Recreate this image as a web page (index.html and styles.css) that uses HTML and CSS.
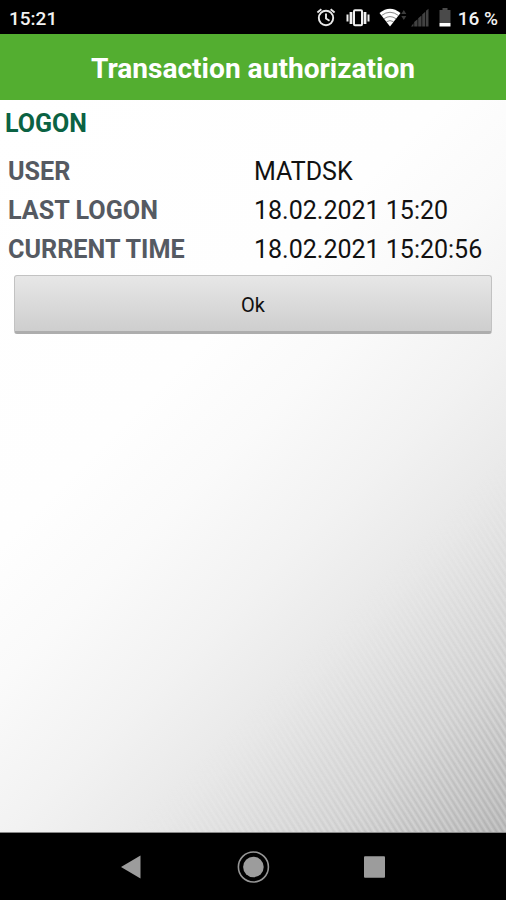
FILE: index.html
```html
<!DOCTYPE html>
<html lang="en">
<head>
  <meta charset="UTF-8" />
  <meta name="viewport" content="width=device-width, initial-scale=1.0"/>
  <title>Transaction authorization</title>
  <link rel="stylesheet" href="styles.css">
</head>
<body>

  <!-- Status bar -->
  <div class="status-bar">
    <span class="clock">15:21</span>
    <svg class="status-icons" width="138" height="34" viewBox="0 0 138 34">
      <!-- alarm -->
      <g fill="none" stroke="#e8e8e8" stroke-width="1.9">
        <circle cx="11" cy="18" r="7.2"/>
        <path d="M11 13.5v5l3.5 2.2M2.4 12.4l4-3.2M19.6 12.4l-4-3.2"/>
      </g>
      <!-- vibrate -->
      <g fill="none" stroke="#f0f0f0">
        <rect x="39" y="10.2" width="8" height="15" rx="1" stroke-width="2"/>
        <path d="M36 12v12M50 12v12" stroke-width="2.8"/>
        <path d="M32.5 14.5v7M53.5 14.5v7" stroke-width="2"/>
      </g>
      <!-- wifi -->
      <path d="M64.5 13Q75 4.5 85.5 13L75 26.5z" fill="#fff"/>
      <path d="M66.5 15.5Q75 9 83.5 15.5M69 18.7Q75 14.5 81 18.7M71.5 21.7Q75 19.5 78.5 21.7" fill="none" stroke="#555" stroke-width=".7"/>
      <path d="M86.3 14l2.5-4 2.5 4zM86.3 16l2.5 4 2.5-4z" fill="#3c3c3c"/>
      <!-- signal -->
      <path d="M96 26.5h2.5v-3.2zM99.2 26.5v-4.5l3.3-2.8v7.3zM103.2 26.5v-8.2l3.3-2.8v11zM107.2 26.5v-12l3.1-2.7v14.7zM111 26.5v-15.8l2.5-2v17.8z" fill="#424242"/>
      <!-- battery -->
      <path d="M124.5 10h3V8h5v2h3v13h-11z" fill="#4a4a4a"/>
      <path d="M124.5 23h11v3.5h-11z" fill="#fff"/>
    </svg>
    <span class="battery">16 %</span>
  </div>

  <div class="navbar">
    <h1>Transaction authorization</h1>
  </div>

  <div class="content">
    <h2>LOGON</h2>
    <dl class="details">
      <dt>USER</dt>
      <dd>MATDSK</dd>
      <dt>LAST LOGON</dt>
      <dd>18.02.2021 15:20</dd>
      <dt>CURRENT TIME</dt>
      <dd>18.02.2021 15:20:56</dd>
    </dl>
    <button class="ok-btn">Ok</button>
  </div>

  <!-- Android buttons -->
  <div class="bottom-nav">
    <svg width="34" height="34" viewBox="0 0 34 34">
      <path d="M7 17L26.5 5.5v23z" fill="#9c9c9c"/>
    </svg>
    <svg width="34" height="34" viewBox="0 0 34 34">
      <circle cx="17.4" cy="17" r="15" fill="none" stroke="#969696" stroke-width="1.6"/>
      <circle cx="17.4" cy="17" r="10.3" fill="#9c9c9c"/>
    </svg>
    <svg width="34" height="34" viewBox="0 0 34 34">
      <rect x="6" y="6.2" width="21" height="21.5" rx="1" fill="#9c9c9c"/>
    </svg>
  </div>

</body>
</html>
```
FILE: styles.css
```css
* {
  box-sizing: border-box;
}

body {
  margin: 0;
  height: 900px;
  display: flex;
  flex-direction: column;
  font-family: Roboto, sans-serif;
  background-color: #000;
  color: #111;
}

.status-bar {
  height: 34px;
  padding: 0 8px 0 9px;
  display: flex;
  align-items: center;
  color: #f2f2f2;
  font-size: 19px;
  font-weight: 500;
}

.status-icons {
  margin-left: auto;
}

.clock,
.battery {
  padding-top: 2px;
}

.battery {
  margin-left: 5px;
}

.navbar {
  height: 66px;
  background-color: #53ae30;
  color: white;
  display: flex;
  align-items: center;
  justify-content: center;
}

.navbar h1 {
  margin: 3px 0 0;
  font-size: 28.1px;
  font-weight: 700;
}

.content {
  flex: 1;
  position: relative;
  background: linear-gradient(135deg, #fff 0%, #fefefe 36%, #fafafa 47%, #f2f2f2 60%, #e8e8e8 72%, #d6d6d6 86%, #b8b8b8 100%);
  border-bottom: 1px solid #888;
}

/* woven stripes fading in towards the corner */
.content::after {
  content: "";
  position: absolute;
  inset: 0;
  pointer-events: none;
  background: repeating-linear-gradient(58deg, rgba(255,255,255,0.2) 0, rgba(0,0,0,0.05) 2.65px, rgba(255,255,255,0.2) 5.3px);
  -webkit-mask-image: linear-gradient(135deg, transparent 69%, #000 92%);
  mask-image: linear-gradient(135deg, transparent 69%, #000 92%);
}

.content h2 {
  margin: 0;
  padding: 9px 6px 0 5px;
  font-size: 25px;
  line-height: 30px;
  font-weight: 700;
  color: #0b6243;
}

.details {
  margin: 13px 0 0;
  padding: 0 8px;
  display: grid;
  grid-template-columns: 246px 1fr;
  font-size: 25px;
  line-height: 39px;
}

.details dt {
  font-size: 25.2px;
  font-weight: 700;
  color: #555a62;
}

.details dd {
  margin: 0;
  white-space: nowrap;
}

.ok-btn {
  display: block;
  width: 478px;
  height: 59px;
  margin: 6px 14px 0;
  padding: 2px 0 0;
  border: 1px solid #c2c2c2;
  border-bottom: 3px solid #adadad;
  border-radius: 3px;
  background: linear-gradient(#e7e7e7, #cecece);
  font-family: inherit;
  font-size: 20px;
  color: #111;
}

.bottom-nav {
  height: 67px;
  padding: 0 114px;
  display: flex;
  align-items: center;
  justify-content: space-between;
}
```
